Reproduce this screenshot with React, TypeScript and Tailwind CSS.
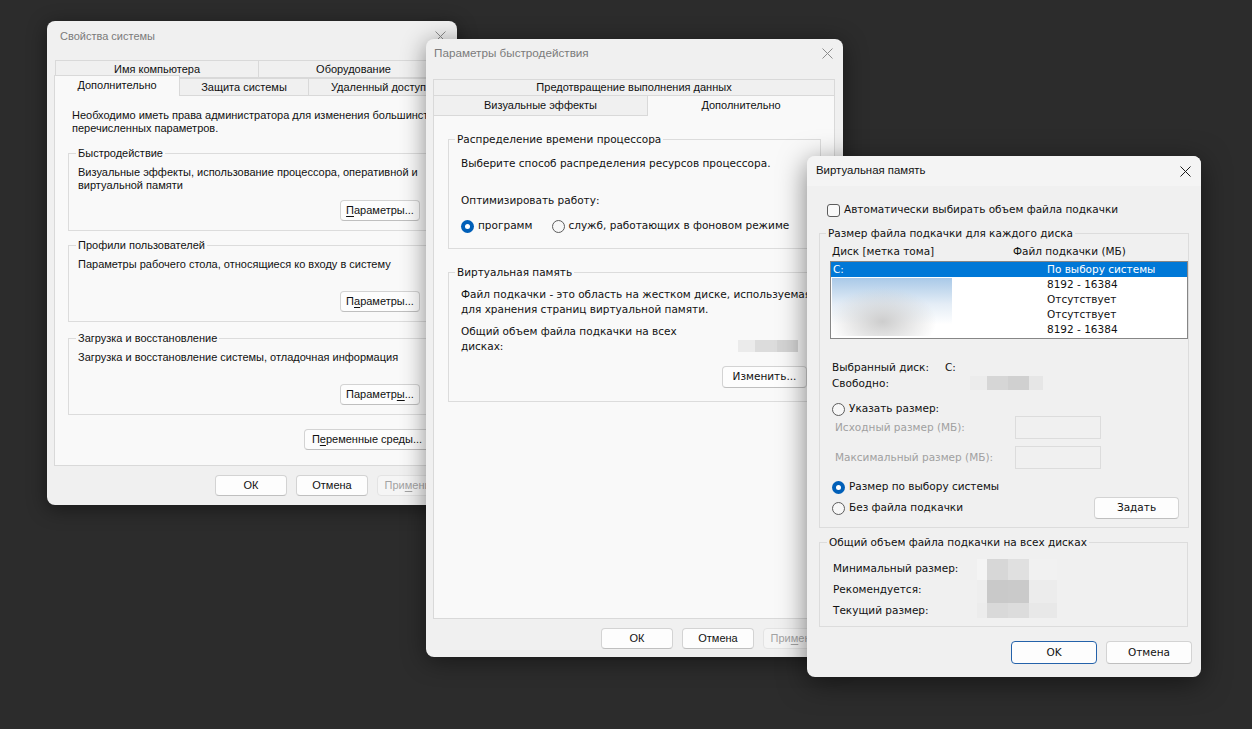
import type { ReactNode } from 'react';

const SEG = "font-['Liberation_Sans',Arial,sans-serif]";
const TAH = "font-['DejaVu_Sans',Verdana,sans-serif] text-[10.5px]";

function CloseX({ dim }: { dim?: boolean }) {
  return (
    <svg width="11" height="11" viewBox="0 0 11 11" fill="none">
      <path d="M0.5 0.5L10.5 10.5M10.5 0.5L0.5 10.5" stroke={dim ? '#8c8c8c' : '#1b1b1b'} strokeWidth="1" />
    </svg>
  );
}

function Btn({ children, className = '', disabled, focused }: { children: ReactNode; className?: string; disabled?: boolean; focused?: boolean }) {
  const tone = disabled
    ? 'bg-[#f5f5f5] border-[#e3e3e3] text-[#a3a3a3]'
    : focused
      ? 'bg-[#fdfdfd] border-[#2462aa] text-[#111]'
      : 'bg-[#fdfdfd] border-[#d3d3d3] border-b-[#bfbfbf] text-[#111]';
  return (
    <div className={`flex shrink-0 items-center justify-center rounded-[4px] border ${tone} ${className}`}>
      {children}
    </div>
  );
}

function Radio({ checked, className = '' }: { checked?: boolean; className?: string }) {
  if (checked) {
    return (
      <span className={`flex h-[13px] w-[13px] shrink-0 items-center justify-center rounded-full bg-[#005fb8] ${className}`}>
        <span className="h-[5px] w-[5px] rounded-full bg-white" />
      </span>
    );
  }
  return <span className={`block h-[13px] w-[13px] shrink-0 rounded-full border border-[#5c5c5c] bg-[#f7f7f7] ${className}`} />;
}

// pixelated redaction blocks
const freeBlocks = ['w-[17px] bg-[#ececec]', 'w-[21px] bg-[#d6d6d6]', 'w-[21px] bg-[#d0d0d0]', 'w-[14px] bg-[#e6e6e6]'];
const totalBlocks = ['w-[17px] bg-[#ebebeb]', 'w-[22px] bg-[#dcdcdc]', 'w-[21px] bg-[#d4d4d4]'];
const sizeBlocks = [
  ['h-[21px]', ['w-[10px] bg-[#f4f4f4]', 'w-[21px] bg-[#d7d7d7]', 'w-[21px] bg-[#e0e0e0]', 'w-[28px] bg-[#f1f1f1]']],
  ['h-[23px]', ['w-[10px] bg-[#eeeeee]', 'w-[21px] bg-[#c9c9c9]', 'w-[21px] bg-[#cacaca]', 'w-[28px] bg-[#ececec]']],
  ['h-[15px]', ['w-[10px] bg-[#ececec]', 'w-[21px] bg-[#d9d9d9]', 'w-[21px] bg-[#dcdcdc]', 'w-[28px] bg-[#e8e8e8]']],
] as const;

function SystemProps() {
  return (
    <div className={`absolute left-[47px] top-[21px] h-[484px] w-[410px] overflow-hidden rounded-[8px] bg-[#f0f0f0] text-[11px] text-[#111] shadow-[0_4px_20px_rgba(0,0,0,0.45)] ${SEG}`}>
      <div className="flex h-[30px] items-center justify-between pl-[13px] pr-[11px] text-[#7b7b7b]">
        <span>Свойства системы</span>
        <CloseX dim />
      </div>
      <div className="mt-[9px] px-[7px]">
        <div className="ml-[1px] flex h-[18px]">
          <div className="flex w-[204px] items-center justify-center border border-[#d9d9d9]">Имя компьютера</div>
          <div className="flex w-[190px] items-center justify-center border-y border-r border-[#d9d9d9]">Оборудование</div>
        </div>
        <div className="flex h-[17px] items-end">
          <div className="relative z-10 -mb-[1px] flex h-[21px] w-[126px] items-center justify-center border-x border-t border-[#d9d9d9] bg-[#f9f9f9] pb-[1px]">Дополнительно</div>
          <div className="flex h-[17px] w-[129px] items-center justify-center border-r border-t border-[#d9d9d9]">Защита системы</div>
          <div className="flex h-[17px] w-[140px] items-center justify-center border-r border-t border-[#d9d9d9] whitespace-nowrap">Удаленный доступ</div>
        </div>
        <div className="h-[371px] w-[395px] overflow-hidden border border-[#d9d9d9] bg-[#f9f9f9]">
          <p className="ml-[17px] mt-[13px] whitespace-nowrap leading-[13px]">
            Необходимо иметь права администратора для изменения большинства
            <br />
            перечисленных параметров.
          </p>
          <fieldset className="ml-[13px] mt-[11px] w-[367px] border border-[#dcdcdc] pb-[9px]">
            <legend className="ml-[7px] px-[2px] leading-[14px]">Быстродействие</legend>
            <p className="ml-[9px] mt-[6px] leading-[13px]">
              Визуальные эффекты, использование процессора, оперативной и
              <br />
              виртуальной памяти
            </p>
            <div className="mt-[8px] flex justify-end pr-[14px]">
              <Btn className="h-[21px] w-[80px]"><span><u className="underline-offset-2">П</u>араметры...</span></Btn>
            </div>
          </fieldset>
          <fieldset className="ml-[13px] mt-[7px] w-[367px] border border-[#dcdcdc] pb-[9px]">
            <legend className="ml-[7px] px-[2px] leading-[14px]">Профили пользователей</legend>
            <p className="ml-[9px] mt-[6px] leading-[13px]">Параметры рабочего стола, относящиеся ко входу в систему</p>
            <div className="mt-[20px] flex justify-end pr-[14px]">
              <Btn className="h-[21px] w-[80px]"><span>П<u className="underline-offset-2">а</u>раметры...</span></Btn>
            </div>
          </fieldset>
          <fieldset className="ml-[13px] mt-[9px] w-[367px] border border-[#dcdcdc] pb-[9px]">
            <legend className="ml-[7px] px-[2px] leading-[14px]">Загрузка и восстановление</legend>
            <p className="ml-[9px] mt-[6px] leading-[13px]">Загрузка и восстановление системы, отладочная информация</p>
            <div className="mt-[20px] flex justify-end pr-[14px]">
              <Btn className="h-[21px] w-[80px]"><span>Параметр<u className="underline-offset-2">ы</u>...</span></Btn>
            </div>
          </fieldset>
          <div className="mt-[14px] flex justify-end pr-[18px]">
            <Btn className="h-[21px] w-[126px]"><span>П<u className="underline-offset-2">е</u>ременные среды...</span></Btn>
          </div>
        </div>
        <div className="mt-[9px] flex w-[395px] justify-end gap-[9px]">
          <Btn className="h-[21px] w-[72px]">ОК</Btn>
          <Btn className="h-[21px] w-[72px]">Отмена</Btn>
          <Btn disabled className="h-[21px] w-[72px]"><span>При<u className="underline-offset-2">м</u>енить</span></Btn>
        </div>
      </div>
    </div>
  );
}

function PerfOptions() {
  return (
    <div className={`absolute left-[426px] top-[39px] h-[618px] w-[417px] overflow-hidden rounded-[8px] bg-[#f0f0f0] text-[11px] text-[#111] shadow-[0_4px_24px_rgba(0,0,0,0.45)] ${SEG}`}>
      <div className="flex h-[28px] items-center justify-between pl-[8px] pr-[10px] text-[11.7px] text-[#7b7b7b]">
        <span>Параметры быстродействия</span>
        <CloseX dim />
      </div>
      <div className="mt-[12px] px-[7px]">
        <div className="flex h-[17px] w-[402px] items-center justify-center border border-[#d9d9d9]">Предотвращение выполнения данных</div>
        <div className="flex h-[19px] items-end">
          <div className="flex h-[19px] w-[215px] items-center justify-center border-x border-[#d9d9d9]">Визуальные эффекты</div>
          <div className="relative z-10 -mb-[1px] flex h-[21px] w-[187px] items-center justify-center border-r border-t border-[#d9d9d9] bg-[#f9f9f9] pb-[2px]">Дополнительно</div>
        </div>
        <div className={`h-[504px] w-[402px] border border-[#d9d9d9] bg-[#f9f9f9] ${TAH}`}>
          <fieldset className="ml-[14px] mt-[16px] w-[373px] border border-[#dcdcdc] pb-[15px]">
            <legend className="ml-[6px] px-[2px] leading-[14px]">Распределение времени процессора</legend>
            <p className="ml-[12px] mt-[10px] leading-[14px]">Выберите способ распределения ресурсов процессора.</p>
            <p className="ml-[12px] mt-[23px] leading-[14px]">Оптимизировать работу:</p>
            <div className="ml-[12px] mt-[12px] flex h-[14px] items-center">
              <Radio checked />
              <span className="ml-[4px]">программ</span>
              <Radio className="ml-[20px]" />
              <span className="ml-[3px]">служб, работающих в фоновом режиме</span>
            </div>
          </fieldset>
          <fieldset className="ml-[14px] mt-[16px] w-[373px] border border-[#dcdcdc] pb-[13px]">
            <legend className="ml-[6px] px-[2px] leading-[14px]">Виртуальная память</legend>
            <p className="ml-[12px] mt-[8px] whitespace-nowrap leading-[15px]">
              Файл подкачки - это область на жестком диске, используемая
              <br />
              для хранения страниц виртуальной памяти.
            </p>
            <div className="ml-[12px] mt-[7px] flex items-end">
              <p className="w-[277px] leading-[15px]">
                Общий объем файла подкачки на всех
                <br />
                дисках:
              </p>
              <div className="mb-[2px] flex h-[12px]">
                {totalBlocks.map((b) => <div key={b} className={b} />)}
              </div>
            </div>
            <div className="mt-[12px] flex justify-end pr-[13px]">
              <Btn className="h-[22px] w-[85px]">Изменить...</Btn>
            </div>
          </fieldset>
        </div>
        <div className="mt-[9px] flex w-[402px] justify-end gap-[9px]">
          <Btn className="h-[21px] w-[72px]">ОК</Btn>
          <Btn className="h-[21px] w-[72px]">Отмена</Btn>
          <Btn disabled className="h-[21px] w-[72px]"><span>При<u className="underline-offset-2">м</u>енить</span></Btn>
        </div>
      </div>
    </div>
  );
}

function VirtualMemory() {
  return (
    <div className={`absolute left-[807px] top-[156px] h-[521px] w-[394px] overflow-hidden rounded-[8px] bg-[#f0f0f0] text-[#111] shadow-[0_6px_28px_rgba(0,0,0,0.5)] ${TAH}`}>
      <div className={`flex h-[30px] items-center justify-between bg-[#f4f4f4] pl-[9px] pr-[10px] text-[11.4px] ${SEG}`}>
        <span>Виртуальная память</span>
        <CloseX />
      </div>
      <div className="ml-[20px] mt-[17px] flex h-[14px] items-center">
        <span className="h-[13px] w-[13px] rounded-[3px] border border-[#5c5c5c] bg-[#f9f9f9]" />
        <span className="ml-[4px]">Автоматически выбирать объем файла подкачки</span>
      </div>

      <fieldset className="ml-[12px] mt-[9px] w-[369px] border border-[#dcdcdc] pb-[8px]">
        <legend className="ml-[6px] px-[2px] leading-[14px]">Размер файла подкачки для каждого диска</legend>
        <div className="mt-[4px] flex leading-[14px]">
          <span className="w-[193px] pl-[12px]">Диск [метка тома]</span>
          <span>Файл подкачки (МБ)</span>
        </div>
        <div className="ml-[10px] mt-[3px] h-[78px] w-[358px] border border-[#868686] bg-white leading-[15px]">
          <div className="flex h-[15px] bg-[#0078d7] text-white">
            <span className="w-[216px] pl-[2px]">C:</span>
            <span>По выбору системы</span>
          </div>
          <div className="flex">
            <div className="w-[216px] pt-[1px]">
              <div className="ml-[1px] h-[58px] w-[120px] bg-[radial-gradient(ellipse_at_42%_75%,#cdcdcd_0%,rgba(255,255,255,0)_55%),linear-gradient(180deg,#a9c9e8_0%,#e4edf6_45%,#ffffff_80%)]" />
            </div>
            <div>
              <div>8192 - 16384</div>
              <div>Отсутствует</div>
              <div>Отсутствует</div>
              <div>8192 - 16384</div>
            </div>
          </div>
        </div>

        <div className="mt-[20px] pl-[12px] leading-[16px]">
          <div className="flex">
            <span className="w-[113px]">Выбранный диск:</span>
            <span>C:</span>
          </div>
          <div className="flex items-center">
            <span className="w-[113px]">Свободно:</span>
            <div className="ml-[25px] flex h-[14px]">
              {freeBlocks.map((b) => <div key={b} className={b} />)}
            </div>
          </div>
        </div>

        <div className="ml-[12px] mt-[11px] flex h-[14px] items-center">
          <Radio />
          <span className="ml-[4px]">Указать размер:</span>
        </div>
        <div className="flex h-[23px] items-center text-[#a0a0a0]">
          <span className="w-[195px] pl-[15px]">Исходный размер (МБ):</span>
          <div className="h-[23px] w-[86px] border border-[#dcdcdc] bg-[#f0f0f0]" />
        </div>
        <div className="mt-[7px] flex h-[23px] items-center text-[#a0a0a0]">
          <span className="w-[195px] pl-[15px]">Максимальный размер (МБ):</span>
          <div className="h-[23px] w-[86px] border border-[#dcdcdc] bg-[#f0f0f0]" />
        </div>
        <div className="ml-[12px] mt-[11px] flex h-[14px] items-center">
          <Radio checked />
          <span className="ml-[4px]">Размер по выбору системы</span>
        </div>
        <div className="ml-[12px] mt-[3px] flex h-[22px] items-center justify-between pr-[9px]">
          <div className="flex items-center">
            <Radio />
            <span className="ml-[4px]">Без файла подкачки</span>
          </div>
          <Btn className="h-[22px] w-[85px]">Задать</Btn>
        </div>
      </fieldset>

      <fieldset className="ml-[12px] mt-[7px] w-[369px] border border-[#dcdcdc] pb-[5px]">
        <legend className="ml-[7px] px-[2px] leading-[14px]">Общий объем файла подкачки на всех дисках</legend>
        <div className="mt-[9px] flex">
          <div className="w-[157px] pl-[13px] leading-[21px]">
            <div>Минимальный размер:</div>
            <div>Рекомендуется:</div>
            <div>Текущий размер:</div>
          </div>
          <div className="mt-[1px]">
            {sizeBlocks.map(([h, cells], i) => (
              <div key={i} className={`flex ${h}`}>
                {cells.map((c) => <div key={c} className={c} />)}
              </div>
            ))}
          </div>
        </div>
      </fieldset>

      <div className="mt-[14px] flex justify-end gap-[9px] pr-[9px]">
        <Btn focused className="h-[23px] w-[86px]">OK</Btn>
        <Btn className="h-[23px] w-[86px]">Отмена</Btn>
      </div>
    </div>
  );
}

export default function App() {
  return (
    <div className="relative h-[729px] w-[1252px] overflow-hidden bg-[#2c2c2c]">
      <SystemProps />
      <PerfOptions />
      <VirtualMemory />
    </div>
  );
}
